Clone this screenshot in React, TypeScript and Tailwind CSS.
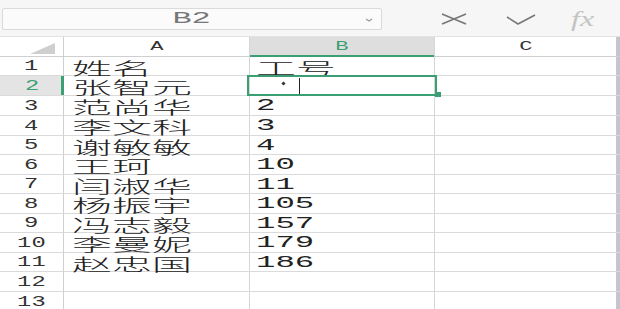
import React from "react";

const rows: { n: string; a: string; b: string }[] = [
  { n: "1", a: "姓名", b: "工号" },
  { n: "2", a: "张智元", b: "" },
  { n: "3", a: "范尚华", b: "2" },
  { n: "4", a: "李文科", b: "3" },
  { n: "5", a: "谢敏敏", b: "4" },
  { n: "6", a: "王珂", b: "10" },
  { n: "7", a: "闫淑华", b: "11" },
  { n: "8", a: "杨振宇", b: "105" },
  { n: "9", a: "冯志毅", b: "157" },
  { n: "10", a: "李曼妮", b: "179" },
  { n: "11", a: "赵忠国", b: "186" },
  { n: "12", a: "", b: "" },
  { n: "13", a: "", b: "" },
];
const heights = [19, 20, 20, 20, 19, 20, 19, 20, 19, 20, 19, 20, 20];

const cjk = { fontFamily: '"Noto Sans CJK SC", sans-serif' };
const mono = { fontFamily: '"Liberation Mono", monospace' };

export default function App() {
  return (
    <div className="w-[620px] h-[309px] overflow-hidden bg-white relative">
      {/* top bar */}
      <div className="h-[37px] bg-[#f6f6f6] flex items-start border-b border-[#e2e2e2]">
        <div className="ml-[2px] mt-[8px] w-[380px] h-[22px] bg-[#fbfbfb] border border-[#dadada] rounded-[2px] flex items-center relative">
          <div className="flex-1 flex justify-center">
            <span style={mono} className="inline-block text-[16px] leading-none text-[#777] scale-x-[2] origin-center">B2</span>
          </div>
          <svg className="absolute right-[8px] top-[9px]" width="8" height="4" viewBox="0 0 8 4">
            <path d="M1 1 L4 3 L7 1" stroke="#999" strokeWidth="1.2" fill="none" />
          </svg>
        </div>
        <svg className="ml-[58px] mt-[12px]" width="28" height="14" viewBox="0 0 28 14">
          <path d="M2 2 L26 12 M2 12 L26 2" stroke="#777" strokeWidth="1.6" fill="none" />
        </svg>
        <svg className="ml-[37px] mt-[12px]" width="32" height="14" viewBox="0 0 32 14">
          <path d="M2 5 L13 12 L30 3" stroke="#777" strokeWidth="1.6" fill="none" strokeLinejoin="round" />
        </svg>
        <div className="ml-[34px] mt-[9px] h-[20px] flex items-center">
          <span
            style={{ fontFamily: '"Liberation Serif", serif' }}
            className="inline-block italic text-[20px] leading-none text-[#c4c4c4] scale-x-[1.6] origin-left"
          >
            fx
          </span>
        </div>
      </div>

      {/* header row */}
      <div className="flex h-[20px] border-b border-[#cfcfcf]">
        <div className="w-[64px] shrink-0 border-r border-[#cfcfcf] relative">
          <svg className="absolute left-[30px] top-[6px]" width="25" height="11" viewBox="0 0 25 11">
            <path d="M25 0 L25 11 L0 11 Z" fill="#cfcfcf" />
          </svg>
        </div>
        <div className="w-[186px] shrink-0 border-r border-[#d6d6d6] flex items-center justify-center">
          <span style={mono} className="inline-block text-[13px] leading-none text-[#333] scale-x-[1.7] origin-center">A</span>
        </div>
        <div className="w-[185px] shrink-0 border-r border-[#d6d6d6] bg-[#dedede] flex items-center justify-center relative">
          <span style={mono} className="inline-block text-[13px] leading-none text-[#3a9f72] scale-x-[1.7] origin-center">B</span>
          <div className="absolute left-0 right-0 -bottom-[1px] h-[2px] bg-[#3a9f72]" />
        </div>
        <div className="w-[182px] shrink-0 border-r border-[#c8c8d0] flex items-center justify-center">
          <span style={mono} className="inline-block text-[13px] leading-none text-[#333] scale-x-[1.7] origin-center">C</span>
        </div>
        <div className="flex-1 bg-[#c4c4cc]" />
      </div>

      {/* rows */}
      {rows.map((r, i) => {
        const sel = i === 1;
        return (
          <div key={r.n} className="flex border-b border-[#dadada]" style={{ height: heights[i] }}>
            <div
              className={
                "w-[64px] shrink-0 flex items-center justify-center relative " +
                (sel ? "bg-[#e4e4e4]" : "border-r border-[#cfcfcf]")
              }
            >
              <span
                style={mono}
                className={
                  "inline-block text-[14px] leading-none scale-x-[1.7] origin-center " +
                  (sel ? "text-[#3a9f72]" : "text-[#333]")
                }
              >
                {r.n}
              </span>
              {sel && <div className="absolute right-0 top-0 bottom-0 w-[3px] bg-[#3a9f72]" />}
            </div>
            <div className="w-[186px] shrink-0 border-r border-[#d6d6d6] flex items-center pl-[8px] pt-[2px]">
              <span style={cjk} className="inline-block whitespace-nowrap font-light text-[17px] leading-none text-[#222] scale-x-[2.35] origin-left">
                {r.a}
              </span>
            </div>
            <div className="w-[185px] shrink-0 border-r border-[#d6d6d6] flex items-center pl-[6px] relative">
              {i === 0 ? (
                <span style={cjk} className="inline-block whitespace-nowrap font-light text-[17px] leading-none text-[#222] scale-x-[2.35] origin-left pt-[2px]">
                  {r.b}
                </span>
              ) : (
                <span style={mono} className="inline-block text-[17px] leading-none text-[#222] scale-x-[1.9] origin-left">
                  {r.b}
                </span>
              )}
              {sel && (
                <>
                  <div className="absolute -left-[3px] -top-[1px] w-[190px] h-[21px] border-2 border-[#3a9f72]" />
                  <div className="absolute left-[185px] top-[16px] w-[6px] h-[5px] bg-[#3a9f72]" />
                  <div className="absolute left-[32px] top-[6px] w-[3px] h-[3px] bg-[#333] rotate-45" />
                  <div className="absolute left-[49px] top-[2px] w-[1px] h-[16px] bg-[#222]" />
                </>
              )}
            </div>
            <div className="w-[182px] shrink-0 border-r border-[#c8c8d0]" />
            <div className="flex-1 bg-[#c4c4cc]" />
          </div>
        );
      })}
    </div>
  );
}
